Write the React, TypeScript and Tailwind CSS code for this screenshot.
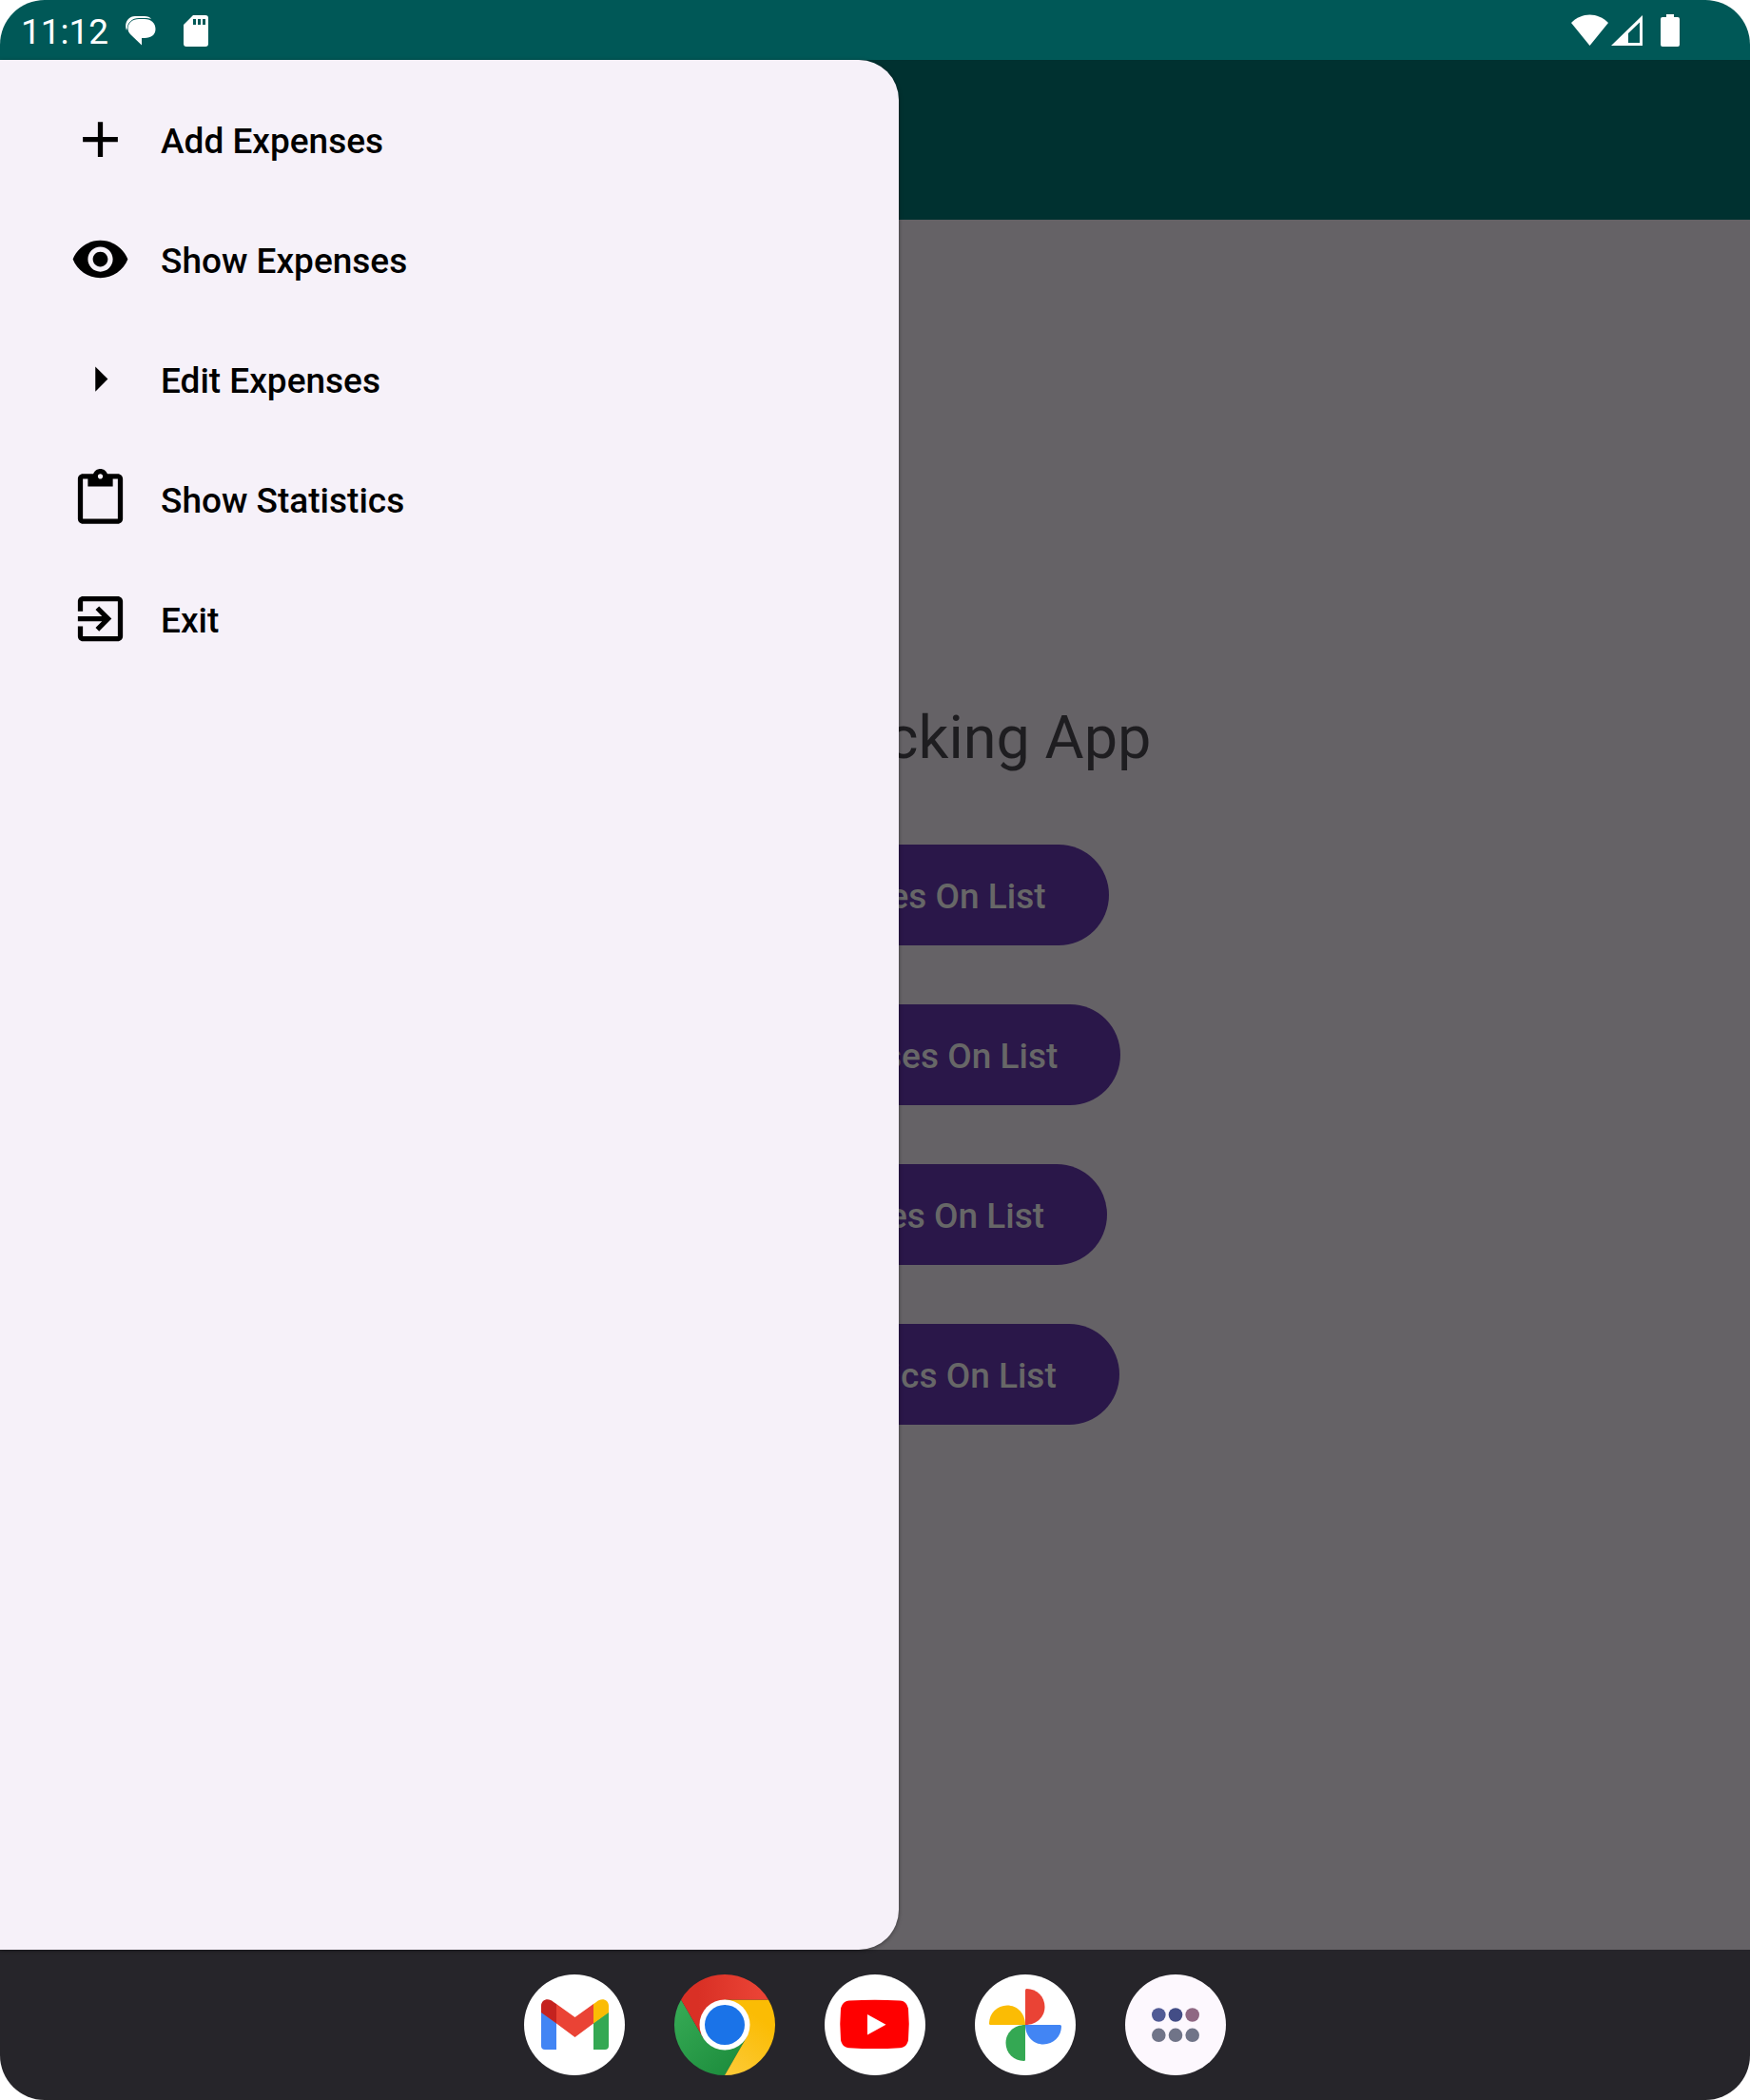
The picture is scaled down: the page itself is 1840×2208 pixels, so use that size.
import type { ReactNode } from "react";

const menu = [
  { label: "Add Expenses", d: "M19 13h-6v6h-2v-6H5v-2h6V5h2v6h6v2z" },
  {
    label: "Show Expenses",
    d: "M12 4.5C7 4.5 2.73 7.61 1 12c1.73 4.39 6 7.5 11 7.5s9.27-3.11 11-7.5c-1.73-4.39-6-7.5-11-7.5zM12 17c-2.76 0-5-2.24-5-5s2.24-5 5-5 5 2.24 5 5-2.24 5-5 5zm0-8c-1.66 0-3 1.34-3 3s1.34 3 3 3 3-1.34 3-3-1.34-3-3-3z",
  },
  { label: "Edit Expenses", d: "M10 17l5-5-5-5v10z" },
  {
    label: "Show Statistics",
    d: "M19 2h-4.18C14.4.84 13.3 0 12 0c-1.3 0-2.4.84-2.82 2H5c-1.1 0-2 .9-2 2v16c0 1.1.9 2 2 2h14c1.1 0 2-.9 2-2V4c0-1.1-.9-2-2-2zm-7 0c.55 0 1 .45 1 1s-.45 1-1 1-1-.45-1-1 .45-1 1-1zm7 18H5V4h2v3h10V4h2v16z",
  },
  {
    label: "Exit",
    d: "M10.09 15.59L11.5 17l5-5-5-5-1.41 1.41L12.67 11H3v2h9.67l-2.58 2.59zM19 3H5c-1.11 0-2 .9-2 2v4h2V5h14v14H5v-4H3v4c0 1.1.89 2 2 2h14c1.1 0 2-.9 2-2V5c0-1.1-.9-2-2-2z",
  },
];

const actions = [
  "Add Expenses On List",
  "Show Expenses On List",
  "Edit Expenses On List",
  "Show Statistics On List",
];

function StatusBar() {
  return (
    <header className="flex h-[63px] items-center bg-[#005857] pl-[22px] pr-[74px] text-white">
      <time className="pt-[4px] text-[37px] leading-[44px]">11:12</time>
      <svg className="ml-[18px] h-[34px] w-[32px]" viewBox="0 0 32 34" fill="currentColor" aria-hidden="true">
        <path d="M1 17C-2 9 3 2 10 2h10c3 0 6 1 7 3-2-1-4-1-7-1h-6C7 4 2 9 2 14z" />
        <path d="M14 5h6c7 0 11.500 4.500 11.500 10.500S27 25 20 25h-3v7.500L5.500 21.500C3.500 19.500 2.500 17.500 2.500 15 2.500 9 7.500 5 14 5z" />
      </svg>
      <svg className="ml-[29px] h-[34px] w-[26px]" viewBox="0 0 26 34" fill="currentColor" aria-hidden="true">
        <path
          fillRule="evenodd"
          d="M10 1h13a3 3 0 0 1 3 3v27a3 3 0 0 1-3 3H3a3 3 0 0 1-3-3V11zM10 5v6h3V5zM15 5v6h3V5zM20 5v6h3V5z"
        />
      </svg>
      <svg className="ml-auto h-[34px] w-[39px]" viewBox="0 0 39 34" fill="currentColor" aria-hidden="true">
        <path d="M0 9C11-2.500 28-2.500 39 9L19.500 33z" />
      </svg>
      <svg className="ml-[3px] h-[34px] w-[33px]" viewBox="0 0 33 34" fill="currentColor" aria-hidden="true">
        <path fillRule="evenodd" d="M33 1v32H0zM30 8.500L18 20v10h12z" />
      </svg>
      <svg className="ml-[19px] h-[34px] w-[20px]" viewBox="0 0 20 34" fill="currentColor" aria-hidden="true">
        <path d="M6 0h8v3h4a2 2 0 0 1 2 2v27a2 2 0 0 1-2 2H2a2 2 0 0 1-2-2V5a2 2 0 0 1 2-2h4z" />
      </svg>
    </header>
  );
}

function DockIcon({ label, children }: { label: string; children: ReactNode }) {
  return (
    <button type="button" aria-label={label} className="size-[106px] rounded-full">
      <svg viewBox="0 0 106 106" className="size-full" aria-hidden="true">
        {children}
      </svg>
    </button>
  );
}

const petal = "M53 53V16.500Q53 15 54.500 15C65 15 73.500 23.500 73.500 34S65 53 53 53z";

function Dock() {
  return (
    <nav aria-label="Dock" className="flex h-[158px] items-center justify-center gap-[52px] bg-[#26252a]">
      <DockIcon label="Gmail">
        <circle cx="53" cy="53" r="53" fill="#fff" />
        <path fill="#4285f4" d="M18 39l16 12v28H22q-4 0-4-4z" />
        <path fill="#34a853" d="M89 39L73 51v28h12q4 0 4-4z" />
        <path fill="#ea4335" d="M34 31l19.500 14L73 31v20.500L53.500 66 34 51.500z" />
        <path fill="#c5221f" d="M18 40v-7c0-7 8-9 13-4l3 2v20.500z" />
        <path fill="#fbbc04" d="M89 40v-7c0-7-8-9-13-4l-3 2v20.500z" />
      </DockIcon>
      <DockIcon label="Chrome">
        <defs>
          <linearGradient id="chrome-red" x1="0" x2="1" y1="0" y2="0">
            <stop offset="0.2" stopColor="#d93025" />
            <stop offset="0.9" stopColor="#ea4335" />
          </linearGradient>
          <linearGradient id="chrome-green" x1="0" x2="0.7" y1="0.2" y2="1">
            <stop offset="0" stopColor="#34a853" />
            <stop offset="1" stopColor="#1e8e3e" />
          </linearGradient>
          <linearGradient id="chrome-yellow" x1="0.6" x2="0.2" y1="0.2" y2="1">
            <stop offset="0" stopColor="#fbbc04" />
            <stop offset="1" stopColor="#fcc934" />
          </linearGradient>
        </defs>
        <path fill="url(#chrome-green)" d="M7.100 26.500L30.100 66.200H76L53 106A53 53 0 0 1 7.100 26.500z" />
        <path fill="url(#chrome-yellow)" d="M98.900 26.500H53v30l22.900 9.700L53 106A53 53 0 0 0 98.900 26.500z" />
        <path fill="url(#chrome-red)" d="M7.100 26.500A53 53 0 0 1 98.900 26.500H53v30l-22.900 9.700z" />
        <circle cx="53" cy="53" r="26.500" fill="#fff" />
        <circle cx="53" cy="53" r="21" fill="#1a73e8" />
      </DockIcon>
      <DockIcon label="YouTube">
        <circle cx="53" cy="53" r="53" fill="#fff" />
        <path
          fill="#f00"
          d="M26 27.500Q53 26 79 27.500C85 27.500 87 32 88 36Q89.500 52 88 69C87 74 84 77 79 77.200Q53 79 26 77.200C21 77 18 74 17 69Q15.500 52 17 36C18 31 21 28 26 27.500z"
        />
        <path fill="#fff" d="M45 42v21.500L64.500 52.700z" />
      </DockIcon>
      <DockIcon label="Photos">
        <circle cx="53" cy="53" r="53" fill="#fff" />
        <path fill="#ea4335" d={petal} />
        <path fill="#4285f4" d={petal} transform="rotate(90 53 53)" />
        <path fill="#34a853" d={petal} transform="rotate(180 53 53)" />
        <path fill="#fbbc04" d={petal} transform="rotate(270 53 53)" />
      </DockIcon>
      <DockIcon label="All apps">
        <circle cx="53" cy="53" r="53" fill="#fdf8fe" />
        <circle cx="35.300" cy="42.500" r="7.300" fill="#515b95" />
        <circle cx="53" cy="42.500" r="7.300" fill="#434d86" />
        <circle cx="70.700" cy="42.500" r="7.300" fill="#8f6883" />
        <circle cx="35.300" cy="63.800" r="7.300" fill="#707488" />
        <circle cx="53" cy="63.800" r="7.300" fill="#707488" />
        <circle cx="70.700" cy="63.800" r="7.300" fill="#707488" />
      </DockIcon>
    </nav>
  );
}

export default function App() {
  return (
    <div className="min-h-screen bg-white">
      <div className="flex min-h-screen flex-col overflow-hidden rounded-[47px] font-['Roboto',sans-serif]">
        <StatusBar />
        <div className="relative flex flex-1 flex-col bg-[#656266]">
          <div className="h-[168px] bg-[#003130]" />
          <main className="flex flex-1 flex-col items-center pt-[508px]">
            <h1 className="mb-[75px] text-[63px] leading-[74px] text-[#1e1d20]">Budget Tracking App</h1>
            <div className="flex flex-col items-center gap-[62px]">
              {actions.map((label) => (
                <button
                  key={label}
                  type="button"
                  className="h-[106px] rounded-full bg-[#2a1749] px-[66px] pt-1 text-[37px] leading-[44px] font-medium text-[#676767]"
                >
                  {label}
                </button>
              ))}
            </div>
          </main>
          <aside className="absolute inset-y-0 left-0 w-[945px] max-w-full rounded-r-[42px] bg-[#f6f1f9] pt-[20px] shadow-[0_1px_4px_rgba(0,0,0,0.4)]">
            <nav aria-label="Main menu">
              <ul>
                {menu.map(({ label, d }) => (
                  <li key={label}>
                    <a href="#" className="flex h-[126px] items-center gap-[32px] pl-[74px] text-black">
                      <svg viewBox="0 0 24 24" className="size-[63px]" fill="currentColor" aria-hidden="true">
                        <path d={d} />
                      </svg>
                      <span className="pt-[5px] text-[37px] leading-[44px] font-medium">{label}</span>
                    </a>
                  </li>
                ))}
              </ul>
            </nav>
          </aside>
        </div>
        <Dock />
      </div>
    </div>
  );
}
